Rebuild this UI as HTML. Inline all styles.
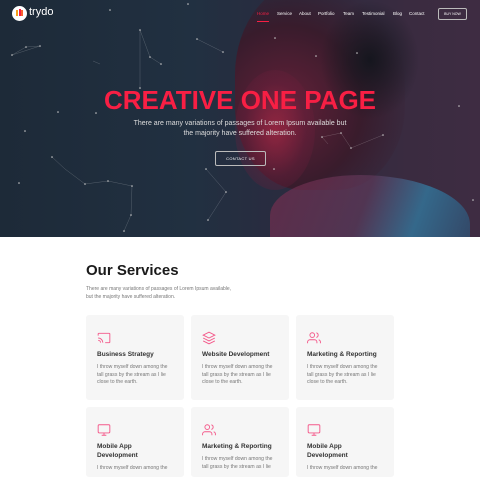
<!DOCTYPE html><html><head><style>
*{margin:0;padding:0;box-sizing:border-box}
body{width:480px;height:470px;overflow:hidden;background:#fff;font-family:"Liberation Sans",sans-serif;position:relative}
.hero{position:absolute;left:0;top:0;width:480px;height:237px;background:linear-gradient(90deg,#1d2a38 0%,#213041 40%,#2a2b3f 60%,#3a2b40 85%,#3e2c42 100%);overflow:hidden}
.p1{position:absolute;left:235px;top:-20px;width:170px;height:210px;border-radius:45% 50% 40% 40%;background:radial-gradient(ellipse at 30% 60%,#6a2038 0%,#3a1a2a 45%,rgba(27,26,36,0) 75%);opacity:.9}
.p2{position:absolute;left:235px;top:70px;width:80px;height:120px;border-radius:50%;background:radial-gradient(ellipse at 50% 50%,rgba(170,40,70,.7) 0%,rgba(110,30,60,.4) 55%,rgba(0,0,0,0) 100%)}
.p3{position:absolute;left:270px;top:175px;width:200px;height:90px;border-radius:45% 55% 0 0;background:linear-gradient(110deg,rgba(130,45,80,.6) 0%,rgba(100,60,95,.6) 45%,rgba(50,130,170,.7) 70%,rgba(40,90,130,.5) 100%)}
.p4{position:absolute;left:320px;top:0px;width:100px;height:120px;border-radius:50%;background:radial-gradient(ellipse,#15161e 0%,rgba(21,22,30,0) 70%)}
.nav{position:absolute;top:11px;font-size:4.5px;color:#fff}
h1{position:absolute;left:0;width:480px;top:85px;text-align:center;font-size:26px;font-weight:bold;color:#f81f44;letter-spacing:0}
.sub{position:absolute;left:0;width:480px;top:119px;text-align:center;font-size:7px;line-height:10px;color:#ddd}
.btn{position:absolute;left:215px;top:151px;width:51px;height:15px;border:1px solid #bbb;border-radius:2px;color:#fff;font-size:4px;text-align:center;line-height:13px;letter-spacing:.3px}
.card{position:absolute;width:98px;background:#f6f6f6;border-radius:3px;padding:0 11px}
.card h3{font-size:6.5px;color:#333;margin-top:35px;line-height:9px;font-weight:bold}
.card p{font-size:5.1px;color:#777;line-height:7.5px;margin-top:5px;padding-right:4px}
.ic{position:absolute;left:11px;top:16px}
</style></head><body>
<div class="hero">
<div class="p1"></div><div class="p4"></div><div class="p2"></div><div class="p3"></div>
<svg width="480" height="237" style="position:absolute;left:0;top:0">
<path fill="none" stroke="rgba(255,255,255,.3)" stroke-width=".4" d="M12 55L26 47L40 46M12 55L40 46M140 30L150 57L161 64M197 39L223 52M52 157L65 169L85 184L108 181L132 186L131 215L124 231M206 169L226 192L208 220M322 137L341 133L351 148L383 135M322 137L328 144M93 61L100 64M140 30L140 88"/>
<g fill="#ccc">
<circle cx="40" cy="46" r=".8"/><circle cx="26" cy="47" r=".8"/><circle cx="12" cy="55" r=".8"/><circle cx="140" cy="30" r=".8"/><circle cx="150" cy="57" r=".8"/><circle cx="161" cy="64" r=".8"/><circle cx="197" cy="39" r=".8"/><circle cx="223" cy="52" r=".8"/><circle cx="110" cy="10" r=".8"/><circle cx="188" cy="4" r=".8"/><circle cx="58" cy="112" r=".8"/><circle cx="96" cy="113" r=".8"/><circle cx="25" cy="131" r=".8"/><circle cx="52" cy="157" r=".8"/><circle cx="85" cy="184" r=".8"/><circle cx="108" cy="181" r=".8"/><circle cx="132" cy="186" r=".8"/><circle cx="131" cy="215" r=".8"/><circle cx="124" cy="231" r=".8"/><circle cx="206" cy="169" r=".8"/><circle cx="226" cy="192" r=".8"/><circle cx="208" cy="220" r=".8"/><circle cx="341" cy="133" r=".8"/><circle cx="351" cy="148" r=".8"/><circle cx="383" cy="135" r=".8"/><circle cx="322" cy="137" r=".8"/><circle cx="357" cy="53" r=".8"/><circle cx="459" cy="106" r=".8"/><circle cx="473" cy="200" r=".8"/><circle cx="19" cy="183" r=".8"/><circle cx="275" cy="38" r=".8"/><circle cx="316" cy="56" r=".8"/><circle cx="274" cy="169" r=".8"/><circle cx="140" cy="88" r=".8"/></g>
</svg>
<div style="position:absolute;left:12px;top:6px;width:15px;height:15px;border-radius:50%;background:#fff"></div>
<div style="position:absolute;left:16px;top:10px;width:2px;height:6px;background:#f7a21b"></div>
<div style="position:absolute;left:18.5px;top:9px;width:2px;height:7px;background:#f81f44"></div>
<div style="position:absolute;left:21px;top:10px;width:2px;height:6px;background:#f9622f"></div>
<div style="position:absolute;left:29px;top:6px;font-size:11px;color:#fff">trydo</div>
<span class="nav" style="left:257px;color:#f81f44">Home</span>
<div style="position:absolute;left:257px;top:21px;width:12px;height:.8px;background:#f81f44"></div>
<span class="nav" style="left:277px">Service</span><span class="nav" style="left:299px">About</span><span class="nav" style="left:318px">Portfolio</span><span class="nav" style="left:343px">Team</span><span class="nav" style="left:362px">Testimonial</span><span class="nav" style="left:393px">Blog</span><span class="nav" style="left:409px">Contact</span>
<div style="position:absolute;left:438px;top:8px;width:29px;height:12px;border:1px solid #bbb;border-radius:2px;font-size:3.5px;color:#fff;text-align:center;line-height:10px">BUY NOW</div>
<h1>CREATIVE ONE PAGE</h1>
<div class="sub">There are many variations of passages of Lorem Ipsum available but<br>the majority have suffered alteration.</div>
<div class="btn">CONTACT US</div>
</div>
<div style="position:absolute;left:86px;top:262px;font-size:15px;font-weight:bold;color:#1a1a1a">Our Services</div>
<div style="position:absolute;left:86px;top:285px;font-size:5px;line-height:8px;color:#777">There are many variations of passages of Lorem Ipsum available,<br>but the majority have suffered alteration.</div>
<div class="card" style="left:86px;top:315px;height:85px"><svg class="ic" width="14" height="14" viewBox="0 0 24 24" fill="none" stroke="#f4598a" stroke-width="1.6"><path d="M2 8V5a1 1 0 011-1h18a1 1 0 011 1v14a1 1 0 01-1 1h-7M2 12a8 8 0 018 8M2 16a4 4 0 014 4M2 20h.01"/></svg><h3>Business Strategy</h3><p>I throw myself down among the tall grass by the stream as I lie close to the earth.</p></div>
<div class="card" style="left:191px;top:315px;height:85px"><svg class="ic" width="14" height="14" viewBox="0 0 24 24" fill="none" stroke="#f4598a" stroke-width="1.6"><path d="M12 2L2 7l10 5 10-5-10-5zM2 17l10 5 10-5M2 12l10 5 10-5"/></svg><h3>Website Development</h3><p>I throw myself down among the tall grass by the stream as I lie close to the earth.</p></div>
<div class="card" style="left:296px;top:315px;height:85px"><svg class="ic" width="14" height="14" viewBox="0 0 24 24" fill="none" stroke="#f4598a" stroke-width="1.6"><path d="M17 21v-2a4 4 0 00-4-4H5a4 4 0 00-4 4v2M9 3a4 4 0 110 8 4 4 0 010-8zM23 21v-2a4 4 0 00-3-3.9M16 3.1a4 4 0 010 7.8"/></svg><h3>Marketing &amp; Reporting</h3><p>I throw myself down among the tall grass by the stream as I lie close to the earth.</p></div>
<div class="card" style="left:86px;top:407px;height:70px"><svg class="ic" width="14" height="14" viewBox="0 0 24 24" fill="none" stroke="#f4598a" stroke-width="1.6"><rect x="2" y="3" width="20" height="14" rx="2"/><path d="M8 21h8M12 17v4"/></svg><h3>Mobile App<br>Development</h3><p>I throw myself down among the</p></div>
<div class="card" style="left:191px;top:407px;height:70px"><svg class="ic" width="14" height="14" viewBox="0 0 24 24" fill="none" stroke="#f4598a" stroke-width="1.6"><path d="M17 21v-2a4 4 0 00-4-4H5a4 4 0 00-4 4v2M9 3a4 4 0 110 8 4 4 0 010-8zM23 21v-2a4 4 0 00-3-3.9M16 3.1a4 4 0 010 7.8"/></svg><h3>Marketing &amp; Reporting</h3><p>I throw myself down among the tall grass by the stream as I lie</p></div>
<div class="card" style="left:296px;top:407px;height:70px"><svg class="ic" width="14" height="14" viewBox="0 0 24 24" fill="none" stroke="#f4598a" stroke-width="1.6"><rect x="2" y="3" width="20" height="14" rx="2"/><path d="M8 21h8M12 17v4"/></svg><h3>Mobile App<br>Development</h3><p>I throw myself down among the</p></div>
</body></html>
